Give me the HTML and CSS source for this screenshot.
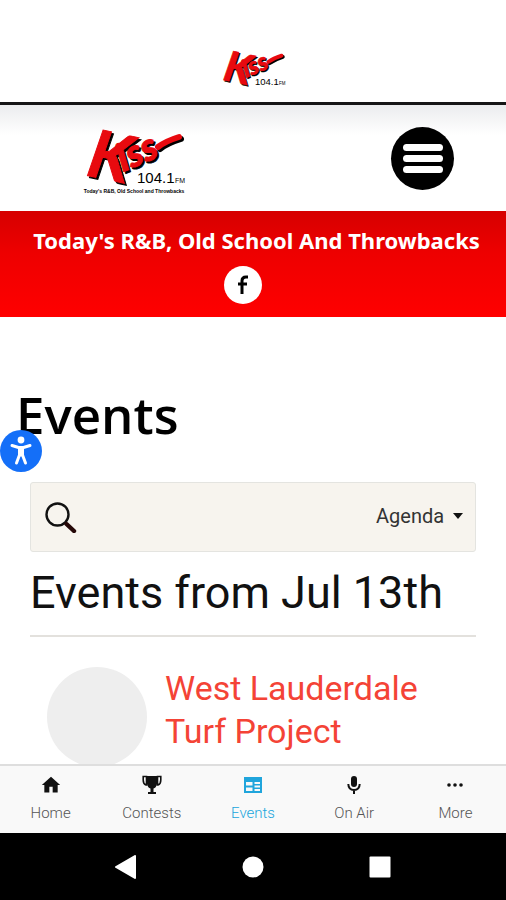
FILE: index.html
```html
<!DOCTYPE html>
<html lang="en">
<head>
    <meta charset="UTF-8">
    <meta name="viewport" content="width=device-width, initial-scale=1.0">
    <title>Kiss 104.1 FM - Events</title>
    <link rel="stylesheet" href="styles.css">
</head>
<body>
    <div class="app-bar">
        <svg class="app-logo" viewBox="0 0 104 68" role="img" aria-label="Kiss 104.1 FM">
            <g class="logo-shade" transform="translate(2 2)">
                <text class="logo-k" x="3" y="54" transform="rotate(12 3 54)">K</text>
                <text class="logo-iss" x="41" y="51" transform="rotate(-23 41 51)">iss</text>
                <path d="M76 26 Q84 20 97 16" stroke-width="6" stroke-linecap="round" fill="none"/>
            </g>
            <g class="logo-red">
                <text class="logo-k" x="3" y="54" transform="rotate(12 3 54)">K</text>
                <text class="logo-iss" x="41" y="51" transform="rotate(-23 41 51)">iss</text>
                <path d="M76 26 Q84 20 97 16" stroke-width="6" stroke-linecap="round" fill="none"/>
            </g>
            <text class="logo-freq" x="55" y="62">104.1</text>
            <text class="logo-fm" x="93" y="62">FM</text>
        </svg>
    </div>

    <header class="site-header">
        <a href="#" class="site-logo">
            <svg class="logo-mark" viewBox="0 0 104 74" role="img" aria-label="Kiss 104.1 FM">
                <g class="logo-shade" transform="translate(2 2)">
                    <text class="logo-k" x="3" y="54" transform="rotate(12 3 54)">K</text>
                    <text class="logo-iss" x="41" y="51" transform="rotate(-23 41 51)">iss</text>
                    <path d="M76 26 Q84 20 97 16" stroke-width="6" stroke-linecap="round" fill="none"/>
                </g>
                <g class="logo-red">
                    <text class="logo-k" x="3" y="54" transform="rotate(12 3 54)">K</text>
                    <text class="logo-iss" x="41" y="51" transform="rotate(-23 41 51)">iss</text>
                    <path d="M76 26 Q84 20 97 16" stroke-width="6" stroke-linecap="round" fill="none"/>
                </g>
                <text class="logo-freq" x="55" y="62">104.1</text>
                <text class="logo-fm" x="93" y="62">FM</text>
                <text class="logo-tag" x="52" y="72">Today's R&amp;B, Old School and Throwbacks</text>
            </svg>
        </a>
        <button class="menu-btn" aria-label="Menu">
            <span></span>
            <span></span>
            <span></span>
        </button>
    </header>

    <div class="banner">
        <p class="slogan">Today's R&amp;B, Old School And Throwbacks</p>
        <a href="#" class="social" aria-label="Facebook">
            <svg width="12" height="20" viewBox="0 0 12 20">
                <path d="M11 2H9Q5 2 5 6V19M1 9H10" stroke="#000" stroke-width="3" fill="none"/>
            </svg>
        </a>
    </div>

    <main class="content">
        <div class="page-title">
            <h1>Events</h1>
            <button class="access-btn" aria-label="Accessibility">
                <svg width="42" height="42" viewBox="0 0 42 42">
                    <circle cx="21" cy="10" r="3.4" fill="#fff"/>
                    <path d="M12 15.500L18.500 17.500H23.500L30 15.500M21 18V25M19.500 18V25L16.500 33M22.500 18V25L25.500 33" stroke="#fff" stroke-width="3" stroke-linecap="round" stroke-linejoin="round" fill="none"/>
                </svg>
            </button>
        </div>

        <div class="events">
            <div class="toolbar">
                <button class="search-btn" aria-label="Search events">
                    <svg width="32" height="32" viewBox="0 0 32 32">
                        <circle cx="12.500" cy="13.500" r="11" fill="none" stroke="#111" stroke-width="2.400"/>
                        <path d="M21.500 23L29 30" stroke="#260808" stroke-width="4.400" stroke-linecap="round"/>
                    </svg>
                </button>
                <div class="view-picker">
                    <select aria-label="Calendar view">
                        <option>Agenda</option>
                        <option>Month</option>
                        <option>Week</option>
                    </select>
                    <svg width="10" height="6" viewBox="0 0 10 6"><path d="M0 0H10L5 6Z" fill="#111"/></svg>
                </div>
            </div>
            <h2>Events from Jul 13th</h2>
            <article class="event">
                <div class="thumb"></div>
                <h3><a href="#">West Lauderdale Turf Project</a></h3>
            </article>
        </div>
    </main>

    <nav class="tabs">
        <a href="#" class="tab">
            <svg width="20" height="20" viewBox="0 0 24 24"><path d="M10 21V14H14V21H20V12H23L12 2 1 12H4V21Z"/></svg>
            Home
        </a>
        <a href="#" class="tab">
            <svg width="20" height="20" viewBox="0 0 20 20">
                <path d="M5 1H15V9Q14 13 11.500 13.500V17H14V19H6V17H8.500V13.500Q6 13 5 9Z"/>
                <path d="M5.500 10H4Q1.200 9 1.200 5V1.500H4.500V10M14.500 10H16Q18.800 9 18.800 5V1.500H15.500V10" fill="none" stroke="#111" stroke-width="1.600"/>
            </svg>
            Contests
        </a>
        <a href="#" class="tab active">
            <svg width="20" height="20" viewBox="0 0 20 20">
                <path d="M1 2H19V18H1ZM3 7V10.500H9.500V7ZM3 12.500V16H9.500V12.500ZM11.500 7V9H17V7ZM11.500 10.500V12.500H17V10.500ZM11.500 14V16H17V14Z" fill-rule="evenodd"/>
            </svg>
            Events
        </a>
        <a href="#" class="tab">
            <svg width="20" height="20" viewBox="0 0 20 20">
                <rect x="7" y="1" width="6" height="11" rx="3"/>
                <path d="M4.300 9Q4.500 15 10 15Q15.500 15 15.700 9M10 15V19" fill="none" stroke="#111" stroke-width="2"/>
            </svg>
            On Air
        </a>
        <a href="#" class="tab">
            <svg width="20" height="20" viewBox="0 0 20 20"><circle cx="4" cy="10" r="1.800"/><circle cx="10" cy="10" r="1.800"/><circle cx="16" cy="10" r="1.800"/></svg>
            More
        </a>
    </nav>

    <div class="system-nav">
        <button aria-label="Back"><svg width="24" height="24" viewBox="0 0 24 24"><path d="M2 12L21 1V23Z" fill="#fff" stroke="#fff" stroke-width="2" stroke-linejoin="round"/></svg></button>
        <button aria-label="Home screen"><svg width="24" height="24" viewBox="0 0 24 24"><circle cx="12" cy="12" r="10.500" fill="#fff"/></svg></button>
        <button aria-label="Recent apps"><svg width="24" height="24" viewBox="0 0 24 24"><rect x="1.500" y="1.500" width="21" height="21" rx="1" fill="#fff"/></svg></button>
    </div>
</body>
</html>
```
FILE: styles.css
```css
* {
    box-sizing: border-box;
}
body {
    margin: 0;
    height: 100vh;
    display: flex;
    flex-direction: column;
    overflow: hidden;
    font-family: Roboto, sans-serif;
    color: #111;
    background: #fff;
}
button {
    border: none;
    padding: 0;
    background: none;
    cursor: pointer;
}
svg {
    display: block;
    flex-shrink: 0;
}
h1, h2, h3, p {
    margin: 0;
}

/* top bar with the station logo */
.app-bar {
    display: flex;
    justify-content: center;
    padding: 45px 0 13px;
    border-bottom: 3px solid #161616;
}
.app-logo {
    width: 66px;
    height: 44px;
    overflow: visible;
}
.logo-k {
    font: italic 700 66px Lato, sans-serif;
}
.logo-iss {
    font: italic 900 38px Lato, sans-serif;
}
.logo-red {
    fill: #e80a0f;
    stroke: #e80a0f;
}
.logo-shade {
    fill: #000;
    stroke: #000;
}
.logo-freq {
    font: 15px "Liberation Sans", sans-serif;
}
.logo-fm {
    font: 7px "Liberation Sans", sans-serif;
}
.logo-tag {
    font: bold 5px "Liberation Sans", sans-serif;
    text-anchor: middle;
}

.site-header {
    display: flex;
    justify-content: space-between;
    align-items: center;
    padding: 16px 52px 16px 82px;
    background: linear-gradient(#ebecee, #fff 30px);
}
.logo-mark {
    width: 104px;
    height: 74px;
    overflow: visible;
}
.menu-btn {
    display: flex;
    flex-direction: column;
    align-items: center;
    justify-content: center;
    gap: 4px;
    width: 63px;
    height: 63px;
    border-radius: 50%;
    background: #000;
}
.menu-btn span {
    width: 40px;
    height: 7px;
    border-radius: 4px;
    background: #fff;
}

.banner {
    display: flex;
    flex-direction: column;
    align-items: center;
    gap: 10px;
    padding: 14px 0 13px;
    background: linear-gradient(#d60000, #ee0000 40%, #ff0000);
}
.slogan {
    padding-left: 7px;
    font: 700 22px/31px "Noto Sans", sans-serif;
    color: #fff;
    white-space: nowrap;
}
.social {
    display: flex;
    align-items: center;
    justify-content: center;
    width: 38px;
    height: 38px;
    margin-right: 20px;
    border-radius: 50%;
    background: #fff;
}

.content {
    flex: 1;
    min-height: 0;
    overflow: hidden;
}
.page-title {
    position: relative;
    padding: 64px 16px 35px;
}
.page-title h1 {
    font: 600 51px/66px "Open Sans", sans-serif;
    color: #000;
}
.access-btn {
    position: absolute;
    left: 0;
    bottom: 10px;
    width: 42px;
    height: 42px;
    border-radius: 50%;
    background: #146ff8;
}
.events {
    padding: 0 30px;
}
.toolbar {
    display: flex;
    justify-content: space-between;
    align-items: center;
    height: 70px;
    padding: 0 12px 0 14px;
    border: 1px solid #e4e4e0;
    border-radius: 3px;
    background: #f7f4ee;
}
.view-picker {
    display: flex;
    align-items: center;
    gap: 8px;
    padding-bottom: 3px;
}
.view-picker select {
    appearance: none;
    border: none;
    padding: 0;
    background: none;
    font: 20px/30px Roboto, sans-serif;
    color: #333;
}
.events h2 {
    padding: 11px 0 12px;
    border-bottom: 2px solid #e3e1dd;
    font-size: 45px;
    line-height: 60px;
    font-weight: 400;
}
.event {
    display: flex;
    gap: 18px;
    padding: 30px 17px;
}
.thumb {
    flex-shrink: 0;
    width: 100px;
    height: 100px;
    border-radius: 50%;
    background: #eee;
}
.event h3 {
    font-size: 34px;
    line-height: 43px;
    font-weight: 400;
}
.event a {
    color: #f44336;
    text-decoration: none;
}

.tabs {
    display: flex;
    height: 69px;
    border-top: 2px solid #dedede;
    background: #f9f9f9;
}
.tab {
    flex: 1;
    display: flex;
    flex-direction: column;
    align-items: center;
    gap: 8px;
    padding-top: 9px;
    font-size: 15px;
    line-height: 20px;
    font-weight: 300;
    color: #555;
    text-decoration: none;
}
.tab svg {
    fill: #111;
}
.tab.active {
    color: #20a5dc;
}
.tab.active svg {
    fill: #20a5dc;
}

.system-nav {
    display: flex;
    justify-content: center;
    align-items: center;
    gap: 103px;
    height: 67px;
    background: #000;
}
```
